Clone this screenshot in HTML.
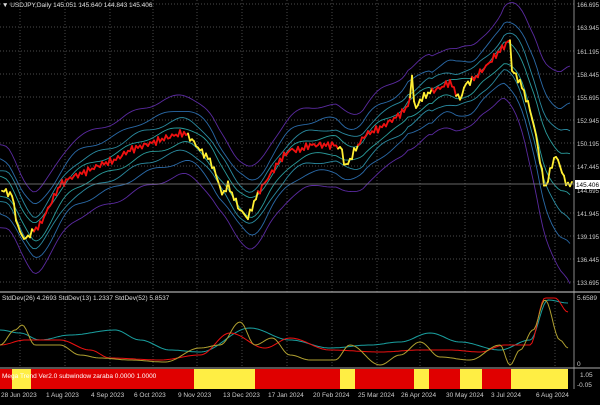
<!DOCTYPE html>
<html><head><meta charset="utf-8"><style>
html,body{margin:0;padding:0;background:#000;}
body{width:600px;height:400px;overflow:hidden;font-family:"Liberation Sans",sans-serif;}
svg text{font-family:"Liberation Sans",sans-serif;font-size:6.5px;fill:#ccc;}
</style></head><body>
<svg id="s" width="600" height="400" xmlns="http://www.w3.org/2000/svg">
<rect width="600" height="400" fill="#000"/>
<g id="grid" stroke="#666" stroke-width="0.7" stroke-dasharray="1,2"></g>
<g id="bands" fill="none"></g>
<g id="price" fill="none" stroke-width="1.8"></g>
<line x1="0" y1="184" x2="574" y2="184" stroke="#888" stroke-width="0.7"/>
<line x1="0" y1="292" x2="600" y2="292" stroke="#aaa" stroke-width="1.2"/>
<line x1="0" y1="368" x2="600" y2="368" stroke="#aaa" stroke-width="1"/>
<line x1="574" y1="0" x2="574" y2="389" stroke="#aaa" stroke-width="0.8"/>
<g id="sub" fill="none" stroke-width="1"></g>
<rect x="0" y="369" width="568" height="20" fill="#e00000"/>
<g fill="#ffee44">
<rect x="12" y="369" width="19" height="20"/><rect x="194" y="369" width="61" height="20"/>
<rect x="340" y="369" width="15" height="20"/><rect x="414" y="369" width="15" height="20"/>
<rect x="460" y="369" width="22" height="20"/><rect x="511" y="369" width="57" height="20"/>
</g>
<text x="2" y="378" style="fill:#fff">Mega Trend Ver2.0 subwindow zaraba 0.0000 1.0000</text>
<text x="2" y="7" style="fill:#ddd">▼ USDJPY,Daily  145.051 145.640 144.843 145.406</text>
<text x="2" y="300" style="fill:#ddd">StdDev(26) 4.2693  StdDev(13) 1.2337  StdDev(52) 5.8537</text>
<g id="axis"></g>
<rect x="575" y="180" width="25" height="9" fill="#fff"/>
<text x="576" y="187" style="fill:#000" textLength="23" lengthAdjust="spacingAndGlyphs">145.406</text>
<g id="dates"></g>
</svg>
<script>
var NS="http://www.w3.org/2000/svg";
function el(p,t,a,txt){var e=document.createElementNS(NS,t);for(var k in a)e.setAttribute(k,a[k]);if(txt)e.textContent=txt;document.getElementById(p).appendChild(e);return e;}
var levels=[["166.695",4],["163.945",27],["161.195",51],["158.445",74],["155.695",97],["152.945",120],["150.195",143],["147.445",166],["144.695",190],["141.945",213],["139.195",236],["136.445",259],["133.695",282]];
levels.forEach(function(l){if(l[0]!="144.695")el("grid","line",{x1:0,x2:574,y1:l[1],y2:l[1]});el("axis","text",{x:577,y:l[1]+3,textLength:22,lengthAdjust:"spacingAndGlyphs"},l[0]);});
el("axis","text",{x:577,y:300,textLength:20,lengthAdjust:"spacingAndGlyphs"},"5.6589");el("axis","text",{x:577,y:366},"0");
el("axis","text",{x:580,y:377},"1.05");el("axis","text",{x:577,y:387},"-0.05");
var dates=[["28 Jun 2023",20],["1 Aug 2023",65],["4 Sep 2023",110],["6 Oct 2023",153],["9 Nov 2023",197],["13 Dec 2023",242],["17 Jan 2024",287],["20 Feb 2024",332],["25 Mar 2024",377],["26 Apr 2024",420],["30 May 2024",465],["3 Jul 2024",510],["6 Aug 2024",555]];
dates.forEach(function(d){el("grid","line",{x1:d[1],x2:d[1],y1:0,y2:292});el("grid","line",{x1:d[1],x2:d[1],y1:302,y2:368});el("dates","text",{x:d[1]-19,y:397},d[0]);});
var P=[[2,190],[12,195],[18,228],[25,240],[32,232],[40,225],[50,205],[60,185],[70,178],[85,172],[100,165],[115,160],[130,150],[145,145],[160,140],[175,135],[185,133],[192,140],[200,150],[210,160],[218,180],[222,195],[228,185],[235,200],[240,210],[248,218],[255,200],[260,190],[270,175],[280,160],[290,150],[300,150],[310,145],[320,145],[335,145],[342,150],[345,168],[350,160],[355,150],[365,135],[380,128],[395,118],[405,110],[410,100],[412,75],[415,112],[420,100],[430,92],[440,88],[450,82],[460,100],[465,85],[475,78],[490,62],[505,45],[510,40],[512,70],[520,82],[525,95],[530,110],[535,130],[540,160],[545,190],[550,172],[555,155],[560,165],[565,182],[570,185]];
function py(x){for(var i=0;i<P.length-1;i++){if(x>=P[i][0]&&x<=P[i+1][0]){var t=(x-P[i][0])/(P[i+1][0]-P[i][0]);return P[i][1]+t*(P[i+1][1]-P[i][1]);}}return P[P.length-1][1];}
var ys=[];for(var x=0;x<=572;x++)ys.push(py(x)+Math.sin(x*1.7)*2.5+Math.sin(x*0.9)*1.5);
var yel=[[0,32],[188,256],[338,356],[409,430],[455,470],[509,572]];
function isY(x){return yel.some(function(r){return x>=r[0]&&x<=r[1];});}
for(var x=2;x<572;x+=2){var c=isY(x)?"#ffee33":"#ee1111";el("price","line",{x1:x,y1:ys[x].toFixed(1),x2:x+2,y2:ys[x+2].toFixed(1),stroke:c,"stroke-linecap":"round"});}
var cen=[];for(var x=0;x<=572;x++){var s=0,n=0;for(var k=-18;k<=6;k++){var j=Math.min(572,Math.max(0,x+k));s+=py(j);n++;}cen.push(s/n);}
function vol(x){return x<500?1:1+(x-500)/40;}
var offs=[[-8,"#2a9c9c"],[8,"#2a9c9c"],[-16,"#2a8aa0"],[16,"#2a8aa0"],[-26,"#2a6aa8"],[26,"#2a6aa8"],[-40,"#5a2aa0"],[40,"#5a2aa0"]];
offs.forEach(function(o){var d="";for(var x=0;x<=572;x+=3){var y=cen[x]+o[0]*vol(x)+Math.sin(x*0.15+o[0])*2;d+=(x?"L":"M")+x+","+y.toFixed(1);}el("bands","path",{d:d,stroke:o[1],"stroke-width":0.9});});
function line(pts,c){var d="";for(var x=0;x<=568;x+=2){var y=0;for(var i=0;i<pts.length-1;i++){if(x>=pts[i][0]&&x<=pts[i+1][0]){var t=(x-pts[i][0])/(pts[i+1][0]-pts[i][0]);t=(1-Math.cos(t*Math.PI))/2;y=pts[i][1]+t*(pts[i+1][1]-pts[i][1]);}}d+=(x?"L":"M")+x+","+y.toFixed(1);}el("sub","path",{d:d,stroke:c,"stroke-width":1});}
line([[0,330],[20,333],[40,340],[70,335],[115,330],[140,340],[170,350],[200,352],[250,328],[290,340],[330,348],[370,345],[400,342],[430,333],[460,342],[500,350],[530,340],[548,300],[568,303]],"#1aa0a0");
line([[0,345],[25,340],[60,340],[90,350],[110,358],[160,360],[200,355],[230,333],[265,348],[290,338],[330,350],[380,352],[420,350],[450,350],[480,352],[505,345],[530,345],[545,298],[555,298],[568,312]],"#ee1111");
line([[0,345],[15,330],[22,325],[35,345],[60,345],[80,355],[100,358],[130,360],[165,362],[200,348],[220,345],[240,322],[255,345],[272,338],[290,355],[310,360],[335,360],[350,345],[380,365],[400,355],[420,342],[440,357],[470,360],[500,345],[510,365],[520,350],[533,330],[545,300],[560,340],[568,348]],"#b0a030");
</script>
</body></html>
